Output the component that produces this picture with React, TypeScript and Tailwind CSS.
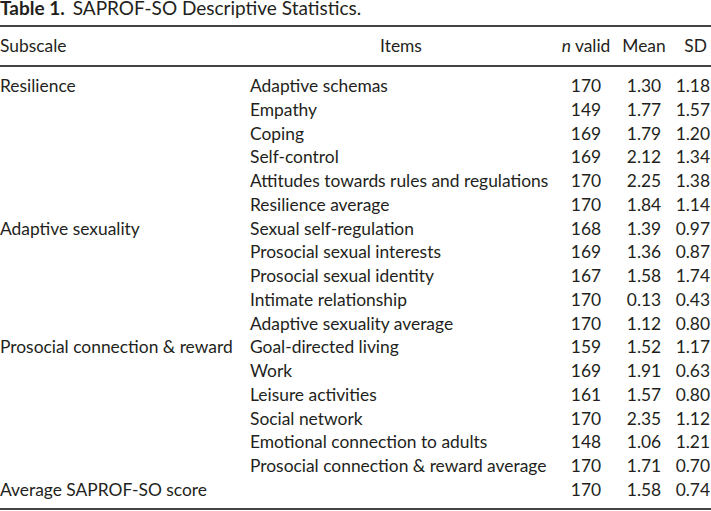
import React from "react";

type Row = { sub: string; item: string; n: string; mean: string; sd: string };

const rows: Row[] = [
  { sub: "Resilience", item: "Adaptive schemas", n: "170", mean: "1.30", sd: "1.18" },
  { sub: "", item: "Empathy", n: "149", mean: "1.77", sd: "1.57" },
  { sub: "", item: "Coping", n: "169", mean: "1.79", sd: "1.20" },
  { sub: "", item: "Self-control", n: "169", mean: "2.12", sd: "1.34" },
  { sub: "", item: "Attitudes towards rules and regulations", n: "170", mean: "2.25", sd: "1.38" },
  { sub: "", item: "Resilience average", n: "170", mean: "1.84", sd: "1.14" },
  { sub: "Adaptive sexuality", item: "Sexual self-regulation", n: "168", mean: "1.39", sd: "0.97" },
  { sub: "", item: "Prosocial sexual interests", n: "169", mean: "1.36", sd: "0.87" },
  { sub: "", item: "Prosocial sexual identity", n: "167", mean: "1.58", sd: "1.74" },
  { sub: "", item: "Intimate relationship", n: "170", mean: "0.13", sd: "0.43" },
  { sub: "", item: "Adaptive sexuality average", n: "170", mean: "1.12", sd: "0.80" },
  { sub: "Prosocial connection & reward", item: "Goal-directed living", n: "159", mean: "1.52", sd: "1.17" },
  { sub: "", item: "Work", n: "169", mean: "1.91", sd: "0.63" },
  { sub: "", item: "Leisure activities", n: "161", mean: "1.57", sd: "0.80" },
  { sub: "", item: "Social network", n: "170", mean: "2.35", sd: "1.12" },
  { sub: "", item: "Emotional connection to adults", n: "148", mean: "1.06", sd: "1.21" },
  { sub: "", item: "Prosocial connection & reward average", n: "170", mean: "1.71", sd: "0.70" },
  { sub: "Average SAPROF-SO score", item: "", n: "170", mean: "1.58", sd: "0.74" },
];

const grid = "grid grid-cols-[250px_302px_68px_56px_35px]";

export default function App() {
  return (
    <div
      className="w-[711px] h-[511px] bg-white text-[#231f20] text-[17.4px] overflow-hidden"
      style={{ fontFamily: "Lato, 'Noto Sans', sans-serif" }}
    >
      <div className="h-[25px] text-[19px] leading-[15px] whitespace-nowrap">
        <span className="font-bold">Table 1.</span>
        <span className="ml-[8px]">SAPROF-SO Descriptive Statistics.</span>
      </div>
      <div className="h-[2px] bg-[#444]" />
      <div className={`${grid} h-[38px] leading-[38px] whitespace-nowrap`}>
        <div>Subscale</div>
        <div className="flex justify-center">Items</div>
        <div className="flex justify-center">
          <span>
            <i>n</i> valid
          </span>
        </div>
        <div className="flex justify-center pr-[8px]">Mean</div>
        <div className="flex justify-end pr-[4px]">SD</div>
      </div>
      <div className="h-[2px] bg-[#444]" />
      <div className="pt-[7px] pb-[6px]">
        {rows.map((r, i) => (
          <div key={i} className={`${grid} h-[23.76px] leading-[23.76px] whitespace-nowrap`}>
            <div>{r.sub}</div>
            <div>{r.item}</div>
            <div className="flex justify-center">{r.n}</div>
            <div className="flex justify-center pr-[8px]">{r.mean}</div>
            <div className="flex justify-end pr-[1px]">{r.sd}</div>
          </div>
        ))}
      </div>
      <div className="h-[2px] bg-[#444]" />
    </div>
  );
}
